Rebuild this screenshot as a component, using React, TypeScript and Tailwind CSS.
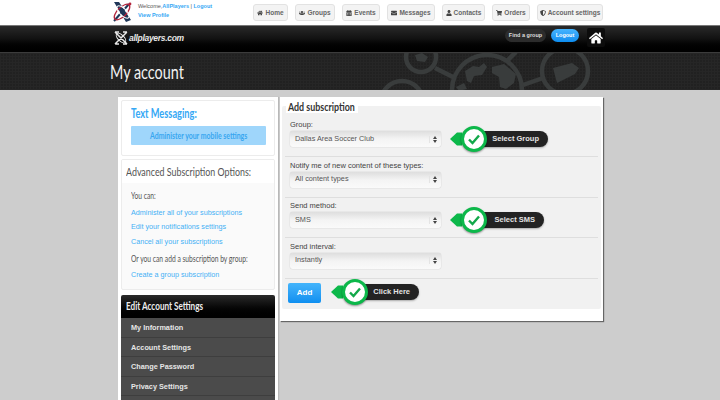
import React from 'react';
import { FaHome, FaUsers, FaCalendarAlt, FaEnvelope, FaUser, FaShoppingCart, FaShieldAlt } from 'react-icons/fa';

const navItems = [
  { label: 'Home', icon: FaHome, width: 'w-[35px]' },
  { label: 'Groups', icon: FaUsers, width: 'w-[40px]' },
  { label: 'Events', icon: FaCalendarAlt, width: 'w-[38px]' },
  { label: 'Messages', icon: FaEnvelope, width: 'w-[48px]' },
  { label: 'Contacts', icon: FaUser, width: 'w-[43px]' },
  { label: 'Orders', icon: FaShoppingCart, width: 'w-[38px]' },
  { label: 'Account settings', icon: FaShieldAlt, width: 'w-[66px]' },
];

// the site's headings are set in a narrow face, which isn't installed
const Narrow = ({ className, children }: { className: string; children: React.ReactNode }) => (
  <span className={`inline-block origin-left whitespace-nowrap font-['Lato',sans-serif] ${className}`}>{children}</span>
);

const Logo = () => (
  <svg width="21" height="22" viewBox="0 0 21 22" fill="none">
    <path d="M2 1 H7 L19 19 L14 21 Z" fill="#1f3658" />
    <path d="M2 20 L17 3" stroke="#1f3658" strokeWidth="2" />
    <ellipse cx="10" cy="11" rx="10" ry="4.5" transform="rotate(-45 10 11)" stroke="#b3243c" strokeWidth="1.3" />
    <ellipse cx="11" cy="11" rx="8" ry="3.5" transform="rotate(45 11 11)" stroke="#ffffff" strokeWidth="1" />
    <circle cx="18" cy="3" r="1.4" fill="#b3243c" />
  </svg>
);

const SmallLogo = () => (
  <svg width="14" height="14" viewBox="0 0 14 14" fill="none" stroke="#e8e8e8" strokeWidth="1.5">
    <path d="M1 1 L13 13 M13 1 L1 13 M1 1 H5 M9 13 H13 M1 13 H5 M9 1 H13" />
    <ellipse cx="7" cy="7" rx="6" ry="3" transform="rotate(45 7 7)" strokeWidth="1" />
  </svg>
);

const BannerArt = () => (
  <svg className="absolute left-[380px] top-0" width="240" height="38" viewBox="0 0 240 38" fill="none" stroke="#393c3c">
    <circle cx="41" cy="4" r="15" strokeWidth="4.5" />
    <circle cx="107" cy="37" r="35" strokeWidth="4.5" />
    <circle cx="185" cy="18" r="23" strokeWidth="4.5" />
    <circle cx="22" cy="49" r="21" strokeWidth="4.5" />
    <path d="M55 15 L75 25 M143 32 L163 25 M128 7 L136 -1" strokeWidth="4.5" />
    <path d="M85 18 l8 -5 l6 1 l5 -4 l3 4 l-5 8 l-8 1 l-3 7 l-4 -2 Z M112 14 l12 -3 l12 10 l-2 9 l-8 6 l-6 -2 l-1 -10 l-7 -4 Z M76 34 l8 -4 l3 6 l-8 2 Z" fill="#393c3c" stroke="none" />
    <path d="M173 15 L192 10 L199 15 L195 21 L177 30 Z" fill="#393c3c" stroke="none" />
    <path d="M35 2 L42 0 L48 4 L45 9 L37 8 Z" fill="#393c3c" stroke="none" />
  </svg>
);

const Callout = ({ label, pillWidth }: { label: string; pillWidth: string }) => (
  <div className="relative flex h-[16px] items-center">
    <svg width="12" height="16" viewBox="0 0 12 16" className="shrink-0">
      <polygon points="0,8 7,1.5 12,1.5 12,14.5 7,14.5" fill="#0cb84a" />
    </svg>
    <div className={`ml-[2px] flex h-[16px] ${pillWidth} items-center justify-end rounded-r-full bg-[#232323] pr-[9px] text-[7.5px] font-bold text-[#e4e4e4] shadow-[0_1px_2px_rgba(0,0,0,0.3)]`}>
      {label}
    </div>
    <div className="absolute left-[11px] top-[-5px] flex h-[26px] w-[26px] items-center justify-center rounded-full border-[3px] border-[#0cb84a] bg-white shadow-[0_1px_2px_rgba(0,0,0,0.4)]">
      <svg width="14" height="12" viewBox="0 0 14 12" fill="none">
        <path d="M2 6.5 L5.5 10 L12 2.5" stroke="#12a84a" strokeWidth="2.4" />
      </svg>
    </div>
  </div>
);

const Dropdown = ({ value }: { value: string }) => (
  <div className="flex h-[16px] w-[151px] items-center justify-between rounded-[3px] bg-gradient-to-b from-[#dedede] via-[#f4f4f4] to-[#fafafa] pl-[5px] pr-[4px] text-[7.3px] text-[#555] shadow-[0_0_1px_rgba(0,0,0,0.35)]">
    <span>{value}</span>
    <span className="flex flex-col gap-[1px] border-l border-[#e4e4e4] pl-[3px]">
      <span className="h-0 w-0 border-x-[2px] border-b-[3px] border-x-transparent border-b-[#444]" />
      <span className="h-0 w-0 border-x-[2px] border-t-[3px] border-x-transparent border-t-[#444]" />
    </span>
  </div>
);

const FormRow = ({ label, value, children }: { label: string; value: string; children?: React.ReactNode }) => (
  <div className="mx-[3px] flex h-[40.5px] flex-col border-b border-[#dedede] pl-[5px] pt-[3.5px]">
    <div className="h-[10px] text-[7.5px] leading-[10px] text-[#444]">{label}</div>
    <div className="mt-[1px] flex items-center">
      <Dropdown value={value} />
      {children}
    </div>
  </div>
);

export default function App() {
  return (
    <div className="flex h-[400px] w-[720px] flex-col overflow-hidden bg-[#cdcdcd] font-['Liberation_Sans',Arial,sans-serif]">
      {/* top white strip */}
      <div className="flex h-[25px] shrink-0 bg-white pl-[112px]">
        <div className="pt-[1px]"><Logo /></div>
        <div className="ml-[5px] pt-[2px] text-[5.5px] font-bold leading-[9px]">
          <div>
            <span className="font-normal text-[#555]">Welcome,</span>
            <span className="text-[#35a8f5]">AllPlayers</span>
            <span className="font-normal text-[#555]"> | </span>
            <span className="text-[#35a8f5]">Logout</span>
          </div>
          <div className="text-[#35a8f5]">View Profile</div>
        </div>
        <div className="absolute left-[253px] top-[4px] flex gap-[7px]">
          {navItems.map((item) => (
            <div key={item.label} className={`flex h-[17px] ${item.width} items-center justify-center gap-[2px] whitespace-nowrap rounded-[3px] border border-[#e2e2e2] bg-[#f3f3f3] text-[6.5px] font-bold text-[#666]`}>
              <item.icon className="shrink-0 text-[6px] text-[#444]" />
              {item.label}
            </div>
          ))}
        </div>
      </div>

      {/* black bar */}
      <div className="flex h-[27px] shrink-0 items-start border-t border-[#777] bg-gradient-to-b from-[#2a2a2a] via-[#111] to-[#000] pl-[114px]">
        <div className="flex items-center gap-[1px] pt-[5px]">
          <SmallLogo />
          <span className="text-[8.5px] font-bold italic tracking-[-0.3px] text-[#e8e8e8]">allplayers.com</span>
        </div>
        <div className="ml-auto mr-[115px] flex items-start pt-[3px]">
          <div className="flex h-[13px] w-[41px] items-center justify-center rounded-full bg-[#2c2c2c] text-[5.5px] font-bold text-[#ddd]">Find a group</div>
          <div className="ml-[5px] flex h-[13px] w-[28px] items-center justify-center rounded-full bg-gradient-to-b from-[#45b4ff] to-[#0a8df0] text-[5.5px] font-bold text-white">Logout</div>
          <div className="ml-[8px] mt-[-1px] flex h-[19px] w-[18px] items-center justify-center rounded-[2px] bg-[#0c0c0c]">
            <FaHome className="text-[14px] text-white" />
          </div>
        </div>
      </div>

      {/* banner */}
      <div className="relative flex h-[38px] shrink-0 items-center overflow-hidden border-t border-[#3c3c3c] bg-[#212121] bg-[linear-gradient(#262626_1px,transparent_1px),linear-gradient(90deg,#262626_1px,transparent_1px)] bg-[size:3px_3px] pl-[110px]">
        <BannerArt />
        <h1 className="relative leading-none">
          <Narrow className="scale-x-[0.72] text-[20px] font-normal text-[#f2f2f2]">My account</Narrow>
        </h1>
      </div>

      {/* content */}
      <div className="flex items-start pl-[118px] pt-[7px]">
        {/* sidebar */}
        <div className="flex h-[400px] w-[160px] shrink-0 flex-col bg-white px-[3px] pt-[3px] shadow-[1px_0_1px_rgba(0,0,0,0.1)]">
          <div className="h-[56px] rounded-[2px] border border-[#ececec] bg-white pl-[9px] pt-[5px]">
            <div className="h-[14px] leading-[14px]">
              <Narrow className="scale-x-[0.71] text-[13px] font-bold text-[#35a8f5]">Text Messaging:</Narrow>
            </div>
            <div className="mt-[6px] flex h-[19px] w-[135px] items-center justify-center overflow-hidden rounded-[1px] bg-[#9fd6fb] pl-[19px]">
              <Narrow className="w-[116px] scale-x-[0.77] text-[9px] font-bold text-[#38a6f0]">Administer your mobile settings</Narrow>
            </div>
          </div>
          <div className="mt-[3px] h-[131px] overflow-hidden rounded-[2px] border border-[#ececec] bg-[#fafafa]">
            <div className="flex h-[23px] items-center bg-white pl-[4px]">
              <Narrow className="scale-x-[0.74] text-[12px] text-[#555]">Advanced Subscription Options:</Narrow>
            </div>
            <div className="pl-[9px] pt-[8px] text-[7.2px]">
              <div className="h-[14.5px] leading-[10px]">
                <Narrow className="scale-x-[0.79] text-[8.5px] text-[#555]">You can:</Narrow>
              </div>
              <div className="mt-[2px] h-[14.5px] leading-[10px] text-[#45b0f5]">Administer all of your subscriptions</div>
              <div className="h-[14.5px] leading-[10px] text-[#45b0f5]">Edit your notifications settings</div>
              <div className="h-[17.5px] leading-[10px] text-[#45b0f5]">Cancel all your subscriptions</div>
              <div className="h-[16px] leading-[10px]">
                <Narrow className="scale-x-[0.79] text-[8.5px] text-[#555]">Or you can add a subscription by group:</Narrow>
              </div>
              <div className="leading-[10px] text-[#45b0f5]">Create a group subscription</div>
            </div>
          </div>
          <div className="mt-[5px] flex h-[23px] items-center rounded-t-[2px] bg-gradient-to-b from-[#2b2b2b] to-[#000] pl-[5px]">
            <Narrow className="scale-x-[0.74] text-[11px] font-bold text-[#eee]">Edit Account Settings</Narrow>
          </div>
          <div className="bg-[#4b4b4b]">
            {['My Information', 'Account Settings', 'Change Password', 'Privacy Settings', ''].map((row) => (
              <div key={row} className="flex h-[19.5px] items-center border-b border-[#3e3e3e] pl-[10px] pt-[3px] text-[7.3px] font-bold text-[#e6e6e6]">{row}</div>
            ))}
          </div>
        </div>

        {/* main panel */}
        <div className="ml-[2px] h-[224px] w-[323px] shrink-0 bg-white px-[2px] pt-[9px] shadow-[1px_1px_1px_rgba(0,0,0,0.5)]">
          <div className="relative h-[203px] rounded-[2px] bg-[#f1f1f1] pt-[10.5px]">
            <div className="absolute left-[4px] top-[-7px] h-[14px] w-[72px] bg-white pl-[2px] leading-[14px]">
              <Narrow className="scale-x-[0.74] text-[12px] font-bold text-[#333]">Add subscription</Narrow>
            </div>
            <FormRow label="Group:" value="Dallas Area Soccer Club">
              <div className="ml-[9px]"><Callout label="Select Group" pillWidth="w-[84px]" /></div>
            </FormRow>
            <FormRow label="Notify me of new content of these types:" value="All content types" />
            <FormRow label="Send method:" value="SMS">
              <div className="ml-[9px]"><Callout label="Select SMS" pillWidth="w-[80px]" /></div>
            </FormRow>
            <FormRow label="Send interval:" value="Instantly" />
            <div className="flex items-center pl-[6px] pt-[4.5px]">
              <div className="flex h-[20px] w-[33px] items-center justify-center rounded-[2px] bg-gradient-to-b from-[#43b4fb] to-[#0c8ff0] text-[8px] font-bold text-white">Add</div>
              <div className="ml-[10px] mt-[-2px]"><Callout label="Click Here" pillWidth="w-[74px]" /></div>
            </div>
          </div>
        </div>
      </div>
    </div>
  );
}
